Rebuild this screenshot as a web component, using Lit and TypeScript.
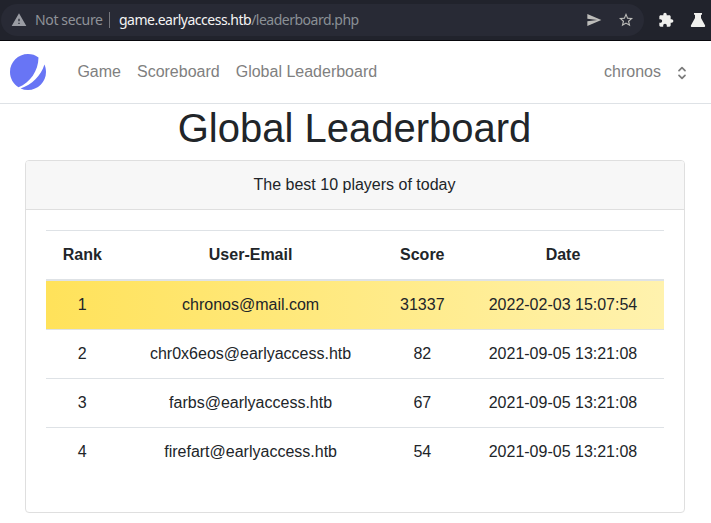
import { LitElement, html, css } from "lit";
import { customElement, property } from "lit/decorators.js";

interface Player {
  rank: number;
  email: string;
  score: number;
  date: string;
}

const PLAYERS: Player[] = [
  { rank: 1, email: "chronos@mail.com", score: 31337, date: "2022-02-03 15:07:54" },
  { rank: 2, email: "chr0x6eos@earlyaccess.htb", score: 82, date: "2021-09-05 13:21:08" },
  { rank: 3, email: "farbs@earlyaccess.htb", score: 67, date: "2021-09-05 13:21:08" },
  { rank: 4, email: "firefart@earlyaccess.htb", score: 54, date: "2021-09-05 13:21:08" },
];

@customElement("browser-bar")
export class BrowserBar extends LitElement {
  static styles = css`
    :host {
      display: block;
      text-align: left;
    }
    .bar {
      box-sizing: border-box;
      height: 41px;
      display: flex;
      align-items: center;
      padding: 0 5px 0 1px;
      background: #21232c;
      border-bottom: 1px solid #08080c;
      font: 14px/20px "Noto Sans", sans-serif;
      overflow: hidden;
    }
    .address {
      box-sizing: border-box;
      width: 643px;
      height: 32px;
      border-radius: 16px;
      background: #282a35;
      display: flex;
      align-items: center;
      padding: 0 10px;
      white-space: nowrap;
    }
    svg {
      display: block;
      flex: none;
      width: 16px;
      height: 16px;
    }
    .warn {
      fill: #9a9ca3;
    }
    .insecure {
      width: 67px;
      margin-left: 8px;
      color: #8f9298;
      letter-spacing: -0.36px;
    }
    .divider {
      width: 1px;
      height: 16px;
      margin: 0 9px 0 7px;
      background: #74767d;
    }
    .url {
      flex: 1;
      color: #8a9095;
      letter-spacing: -0.5px;
    }
    .host {
      color: #f4f4f4;
    }
    .actions {
      display: flex;
      align-items: center;
      gap: 16px;
      fill: #bdbdba;
    }
    .extensions {
      display: flex;
      gap: 16px;
      margin-left: 14px;
      fill: #f0f0ee;
    }
  `;

  render() {
    return html`
      <div class="bar">
        <div class="address">
          <svg class="warn" viewBox="0 0 24 24"><path d="M1 21h22L12 2 1 21zm12-3h-2v-2h2v2zm0-4h-2v-4h2v4z" /></svg>
          <span class="insecure">Not secure</span>
          <span class="divider"></span>
          <span class="url"><span class="host">game.earlyaccess.htb</span>/leaderboard.php</span>
          <span class="actions">
            <svg viewBox="0 0 24 24"><path d="M2 21L23 12 2 3v7l15 2-15 2z" /></svg>
            <svg viewBox="0.6 0.6 22.8 22.8"><path d="M22 9.24l-7.19-.62L12 2 9.19 8.63 2 9.24l5.46 4.73L5.82 21 12 17.27 18.18 21l-1.63-7.03L22 9.24zM12 15.4l-3.76 2.27 1-4.28-3.32-2.88 4.38-.38L12 6.1l1.71 4.04 4.38.38-3.32 2.88 1 4.28L12 15.4z" /></svg>
          </span>
        </div>
        <div class="extensions">
          <svg viewBox="0 0 24 24"><path d="M20.5 11H19V7c0-1.1-.9-2-2-2h-4V3.5C13 2.12 11.88 1 10.5 1S8 2.12 8 3.5V5H4c-1.1 0-1.99.9-1.99 2v3.8H3.5c1.49 0 2.7 1.21 2.7 2.7s-1.21 2.7-2.7 2.7H2V20c0 1.1.9 2 2 2h3.8v-1.5c0-1.49 1.21-2.7 2.7-2.7 1.49 0 2.7 1.21 2.7 2.7V22H17c1.1 0 2-.9 2-2v-4h1.5c1.38 0 2.5-1.12 2.5-2.5S21.88 11 20.5 11z" /></svg>
          <svg viewBox="0 0 16 16"><path d="M4 1h8v1.7h-1V6l4 7.2c.5 1-.1 1.8-1 1.8H2c-.9 0-1.5-.8-1-1.8L5 6V2.7H4z" /></svg>
        </div>
      </div>
    `;
  }
}

@customElement("site-nav")
export class SiteNav extends LitElement {
  @property() user = "";

  static styles = css`
    :host {
      display: block;
      text-align: left;
    }
    .nav {
      box-sizing: border-box;
      height: 63px;
      display: flex;
      align-items: center;
      padding: 0 21px 0 10px;
      border-bottom: 1px solid #dee2e6;
      color: #808080;
      font: 16px/24px "Liberation Sans", Arial, sans-serif;
    }
    .logo {
      width: 36px;
      height: 36px;
      margin-right: 31.4px;
      fill: #6875f5;
    }
    .links {
      flex: 1;
      display: flex;
      gap: 16px;
    }
    .user {
      display: flex;
      align-items: center;
      gap: 13px;
    }
    .chevrons {
      width: 16px;
      height: 16px;
      margin-top: 2px;
      fill: none;
      stroke: #7c7c7c;
      stroke-width: 2.6;
      stroke-linecap: round;
      stroke-linejoin: round;
    }
  `;

  render() {
    return html`
      <nav class="nav">
        <svg class="logo" viewBox="0 0 48 48">
          <path d="M11.395 44.428C4.557 40.198 0 32.632 0 24 0 10.745 10.745 0 24 0a23.891 23.891 0 0113.997 4.502c-.2 17.907-11.097 33.245-26.602 39.926z" />
          <path d="M14.134 45.885A23.914 23.914 0 0024 48c13.255 0 24-10.745 24-24 0-3.516-.756-6.856-2.115-9.866-4.659 15.143-16.608 27.092-31.75 31.751z" />
        </svg>
        <div class="links">
          <span>Game</span><span>Scoreboard</span><span>Global Leaderboard</span>
        </div>
        <div class="user">
          <span>${this.user}</span>
          <svg class="chevrons" viewBox="0 0 24 24"><path d="M7.5 8.5L12 4l4.5 4.5M16.5 15.5L12 20l-4.5-4.5" /></svg>
        </div>
      </nav>
    `;
  }
}

@customElement("app-root")
export class AppRoot extends LitElement {
  static styles = css`
    :host {
      display: block;
      height: 523px;
      overflow: hidden;
      background: #fff;
      color: #212529;
      font: 16px/24px "Liberation Sans", Arial, sans-serif;
      text-align: center;
    }
    h1 {
      margin: 0 2px 8px 0;
      font-size: 40px;
      line-height: 48px;
      font-weight: 400;
    }
    .card {
      box-sizing: border-box;
      width: 660px;
      height: 353px;
      margin-left: 25px;
      border: 1px solid #dfdfdf;
      border-radius: 4px;
    }
    .card-header {
      padding: 12px 21px 12px 20px;
      background: #f7f7f7;
      border-bottom: 1px solid #dfdfdf;
      border-radius: 3px 3px 0 0;
    }
    .table {
      margin: 20px 20px 0;
      border-top: 1px solid #dee2e6;
    }
    .row {
      display: grid;
      grid-template-columns: 72.6px 264px 79.4px 202px;
      padding: 12px 0;
      border-bottom: 1px solid #dee2e6;
    }
    .head {
      font-weight: 700;
      border-bottom-width: 2px;
    }
    .first {
      background: linear-gradient(to right, #ffe25a, #fff2ae) padding-box;
    }
    .row:last-child {
      border-bottom: 0;
    }
  `;

  render() {
    return html`
      <browser-bar></browser-bar>
      <site-nav user="chronos"></site-nav>
      <main>
        <h1>Global Leaderboard</h1>
        <section class="card">
          <div class="card-header">The best 10 players of today</div>
          <div class="table">
            <div class="row head">
              <span>Rank</span><span>User-Email</span><span>Score</span><span>Date</span>
            </div>
            ${PLAYERS.map(
              (p) => html`
                <div class="row ${p.rank === 1 ? "first" : ""}">
                  <span>${p.rank}</span><span>${p.email}</span><span>${p.score}</span><span>${p.date}</span>
                </div>
              `,
            )}
          </div>
        </section>
      </main>
    `;
  }
}
